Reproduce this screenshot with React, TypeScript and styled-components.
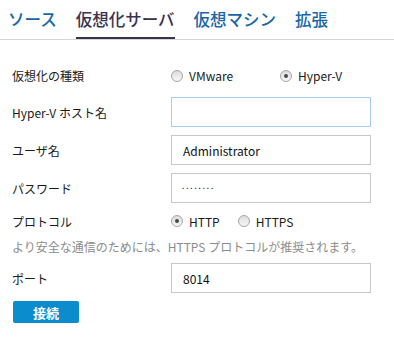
import React from "react";
import styled, { createGlobalStyle } from "styled-components";

const Global = createGlobalStyle`
  html, body { margin: 0; padding: 0; background: #ffffff; }
  body { font-family: "Noto Sans CJK JP", "Noto Sans", sans-serif; color: #1a1a1a; }
  * { box-sizing: border-box; }
`;

const Page = styled.div`
  width: 394px;
  height: 340px;
  background: #fff;
`;

const TabBar = styled.nav`
  display: flex;
  gap: 19px;
  height: 40px;
  padding-left: 8px;
  border-bottom: 1px solid #d3d6dc;
`;

const Tab = styled.div<{ $active?: boolean }>`
  display: flex;
  align-items: center;
  height: 39px;
  padding-top: 1px;
  font-size: 16.5px;
  font-weight: 500;
  color: ${(p) => (p.$active ? "#3a3350" : "#1767a6")};
  border-bottom: 2px solid ${(p) => (p.$active ? "#3a3350" : "transparent")};
  cursor: pointer;
`;

const Form = styled.div`
  display: flex;
  flex-direction: column;
  gap: 8px;
  padding: 22px 0 0 12px;
`;

const Row = styled.div<{ $h: number }>`
  display: grid;
  grid-template-columns: 159px 200px;
  align-items: center;
  height: ${(p) => p.$h}px;
`;

const Label = styled.label`
  font-size: 12px;
  color: #1a1a1a;
`;

const Input = styled.input<{ $focus?: boolean; $dots?: boolean }>`
  width: 200px;
  height: 30px;
  border: 1px solid ${(p) => (p.$focus ? "#a9cbee" : "#c8c8c8")};
  padding: 0 ${(p) => (p.$dots ? "9px" : "11px")};
  font-family: "Noto Sans CJK JP", "Noto Sans", sans-serif;
  font-size: ${(p) => (p.$dots ? "7px" : "12px")};
  font-weight: ${(p) => (p.$dots ? 700 : 400)};
  color: ${(p) => (p.$dots ? "#000" : "#111")};
  outline: none;
  background: #fff;
`;

const Options = styled.div<{ $gap: number }>`
  display: flex;
  align-items: center;
  gap: ${(p) => p.$gap}px;
`;

const Option = styled.label<{ $w?: number }>`
  display: flex;
  align-items: center;
  gap: 6px;
  font-size: 12px;
  color: #1a1a1a;
  ${(p) => (p.$w ? `width: ${p.$w}px;` : "")}
`;

const Radio = styled.span<{ $checked?: boolean }>`
  position: relative;
  width: 12px;
  height: 12px;
  border-radius: 50%;
  border: 1px solid #a6a6a6;
  background: linear-gradient(#dcdcdc, #f7f7f7);
  flex: none;
  &::after {
    content: "";
    display: ${(p) => (p.$checked ? "block" : "none")};
    position: absolute;
    left: 3px;
    top: 3px;
    width: 4px;
    height: 4px;
    border-radius: 50%;
    background: #4a4a4a;
  }
`;

const Hint = styled.div`
  height: 16px;
  line-height: 16px;
  font-size: 12px;
  color: #8c8c8c;
`;

const Button = styled.button`
  width: 66px;
  height: 22px;
  margin-left: 1px;
  border: none;
  border-radius: 2px;
  background: #0b8dcd;
  color: #fff;
  font-family: "Noto Sans CJK JP", "Noto Sans", sans-serif;
  font-size: 13px;
  font-weight: 700;
  padding: 0;
  cursor: pointer;
`;

export default function App() {
  return (
    <Page>
      <Global />
      <TabBar>
        <Tab>ソース</Tab>
        <Tab $active>仮想化サーバ</Tab>
        <Tab>仮想マシン</Tab>
        <Tab>拡張</Tab>
      </TabBar>
      <Form>
        <Row $h={27}>
          <Label>仮想化の種類</Label>
          <Options $gap={0}>
            <Option $w={109}>
              <Radio />
              VMware
            </Option>
            <Option>
              <Radio $checked />
              Hyper-V
            </Option>
          </Options>
        </Row>
        <Row $h={30}>
          <Label>Hyper-V ホスト名</Label>
          <Input $focus defaultValue="" />
        </Row>
        <Row $h={30}>
          <Label>ユーザ名</Label>
          <Input defaultValue="Administrator" />
        </Row>
        <Row $h={30}>
          <Label>パスワード</Label>
          <Input $dots defaultValue="········" />
        </Row>
        <Row $h={20}>
          <Label>プロトコル</Label>
          <Options $gap={18}>
            <Option>
              <Radio $checked />
              HTTP
            </Option>
            <Option>
              <Radio />
              HTTPS
            </Option>
          </Options>
        </Row>
        <Hint>より安全な通信のためには、HTTPS プロトコルが推奨されます。</Hint>
        <Row $h={30}>
          <Label>ポート</Label>
          <Input defaultValue="8014" />
        </Row>
        <Button>接続</Button>
      </Form>
    </Page>
  );
}
